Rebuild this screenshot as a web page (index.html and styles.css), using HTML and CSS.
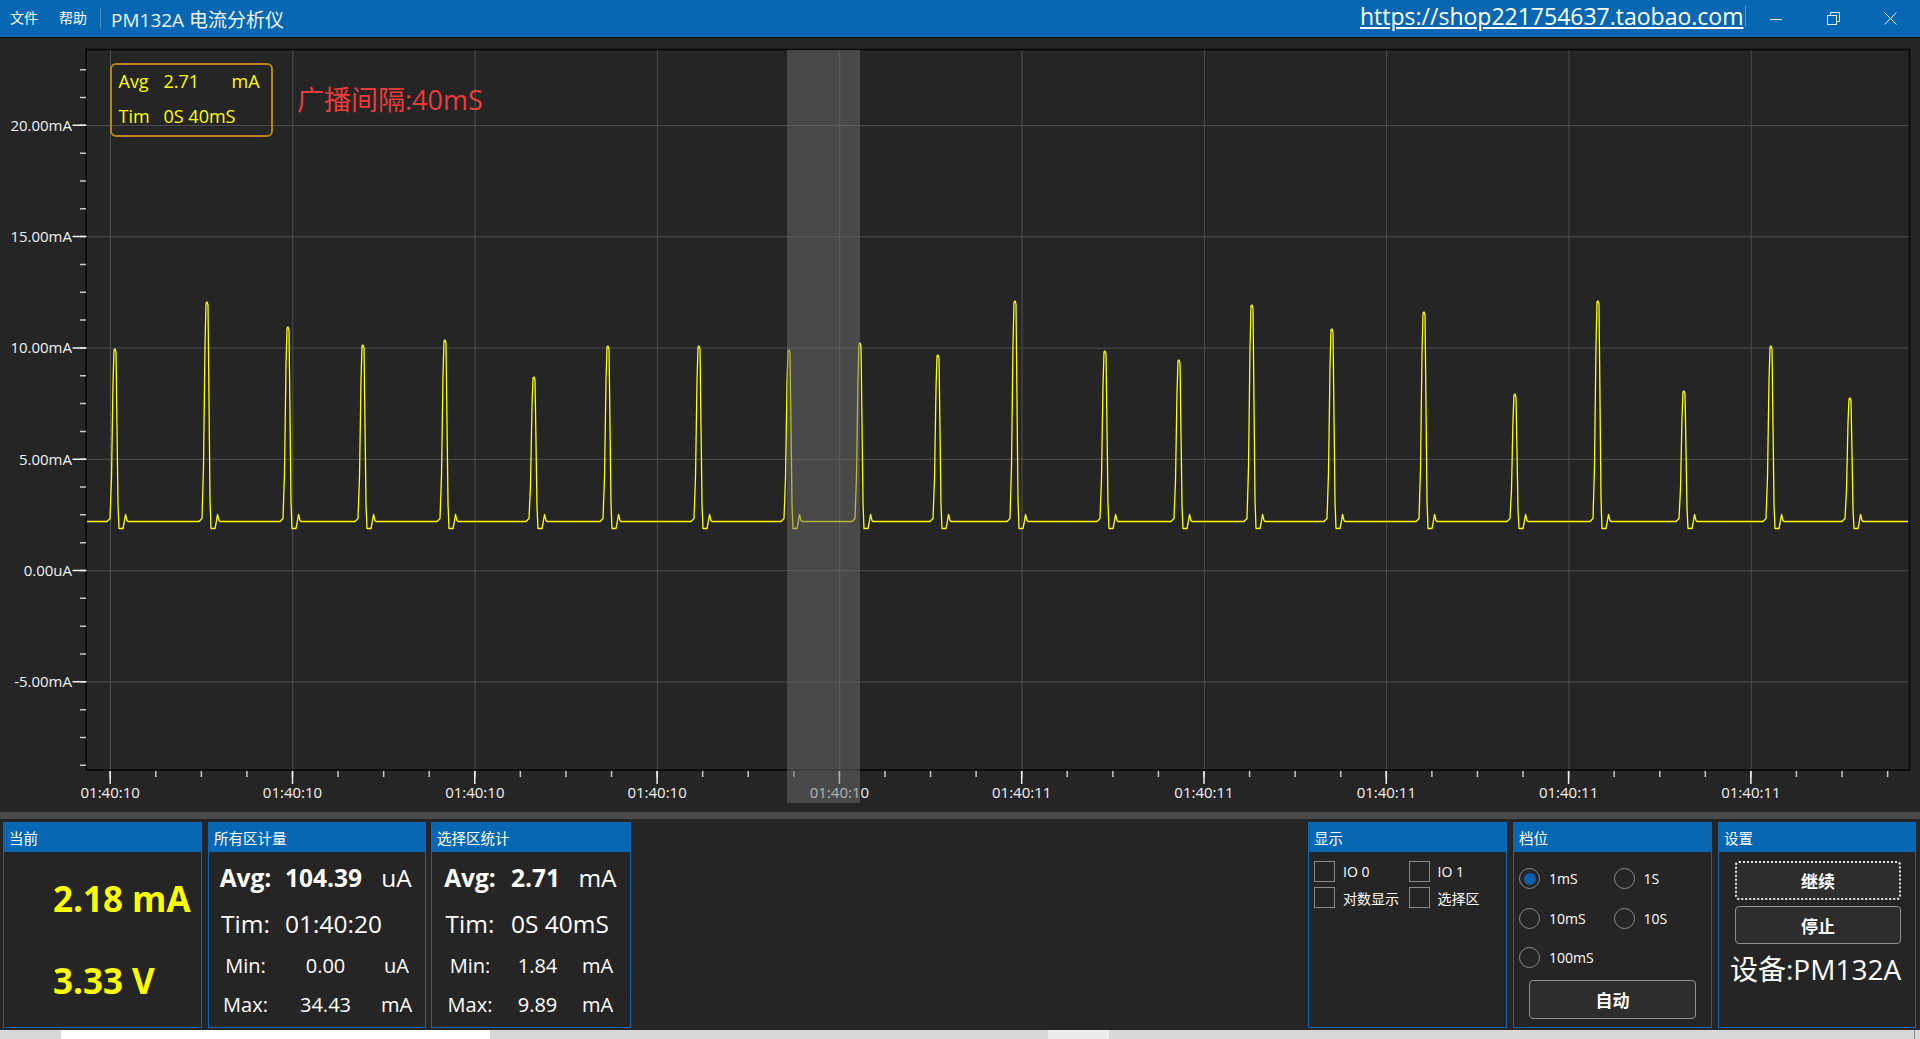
FILE: index.html
```html
<!DOCTYPE html>
<html lang="zh-CN">
<head>
<meta charset="utf-8">
<title>PM132A 电流分析仪</title>
<link rel="stylesheet" href="styles.css">
</head>
<body>
<div class="app">
  <header class="titlebar">
    <nav class="menu"><span class="menu-item">文件</span><span class="menu-item">帮助</span></nav>
    <span class="divider"></span>
    <span class="app-title">PM132A 电流分析仪</span>
    <a class="shop-link">https://shop221754637.taobao.com</a>
    <span class="caret"></span>
    <div class="win-controls">
      <span class="win-btn"><svg width="12" height="12" viewBox="0 0 12 12"><path d="M0 6.5h12" class="ico"/></svg></span>
      <span class="win-btn"><svg width="13" height="13" viewBox="0 0 13 13"><rect x="0.5" y="3.5" width="9" height="9" class="ico"/><path d="M3.5 3.5v-3h9v9h-3" class="ico"/></svg></span>
      <span class="win-btn"><svg width="13" height="13" viewBox="0 0 13 13"><path d="M0.5 0.5l12 12M12.5 0.5l-12 12" class="ico"/></svg></span>
    </div>
  </header>

  <section class="chart">
    <svg class="plot" width="1920" height="774" viewBox="0 38 1920 774">
      <g class="grid">
        <path d="M110.5,50v720m182.3,-720v720m182.3,-720v720m182.3,-720v720m182.3,-720v720m182.3,-720v720m182.3,-720v720m182.3,-720v720m182.3,-720v720m182.3,-720v720"/>
        <path d="M87,125.5h1822m-1822,111.3h1822m-1822,111.3h1822m-1822,111.3h1822m-1822,111.3h1822m-1822,111.3h1822"/>
      </g>
      <path class="trace" id="trace" d="M87,521.5L1908,521.5"/>
      <rect class="frame" x="86" y="49.5" width="1823.5" height="720.5"/>
      <path class="tick-minor" d="M80,69.65h6m-6,27.825h6m-6,27.825h6m-6,27.825h6m-6,27.825h6m-6,27.825h6m-6,27.825h6m-6,27.825h6m-6,27.825h6m-6,27.825h6m-6,27.825h6m-6,27.825h6m-6,27.825h6m-6,27.825h6m-6,27.825h6m-6,27.825h6m-6,27.825h6m-6,27.825h6m-6,27.825h6m-6,27.825h6m-6,27.825h6m-6,27.825h6m-6,27.825h6m-6,27.825h6m-6,27.825h6m-6,27.825h6"/>
      <path class="tick-major" d="M72.5,125.3h14m-14,111.3h14m-14,111.3h14m-14,111.3h14m-14,111.3h14m-14,111.3h14"/>
      <path class="tick-minor" d="M110.2,771v6m45.575,-6v6m45.575,-6v6m45.575,-6v6m45.575,-6v6m45.575,-6v6m45.575,-6v6m45.575,-6v6m45.575,-6v6m45.575,-6v6m45.575,-6v6m45.575,-6v6m45.575,-6v6m45.575,-6v6m45.575,-6v6m45.575,-6v6m45.575,-6v6m45.575,-6v6m45.575,-6v6m45.575,-6v6m45.575,-6v6m45.575,-6v6m45.575,-6v6m45.575,-6v6m45.575,-6v6m45.575,-6v6m45.575,-6v6m45.575,-6v6m45.575,-6v6m45.575,-6v6m45.575,-6v6m45.575,-6v6m45.575,-6v6m45.575,-6v6m45.575,-6v6m45.575,-6v6m45.575,-6v6m45.575,-6v6m45.575,-6v6m45.575,-6v6"/>
      <path class="tick-major" d="M110.2,771v13m182.3,-13v13m182.3,-13v13m182.3,-13v13m182.3,-13v13m182.3,-13v13m182.3,-13v13m182.3,-13v13m182.3,-13v13m182.3,-13v13"/>
      <g class="axis-label ylabels">
        <text x="72" y="130.6">20.00mA</text>
        <text x="72" y="241.9">15.00mA</text>
        <text x="72" y="353.2">10.00mA</text>
        <text x="72" y="464.5">5.00mA</text>
        <text x="72" y="575.8">0.00uA</text>
        <text x="72" y="687.1">-5.00mA</text>
      </g>
      <g class="axis-label xlabels">
        <text x="110.2" y="798.4">01:40:10</text>
        <text x="292.5" y="798.4">01:40:10</text>
        <text x="474.8" y="798.4">01:40:10</text>
        <text x="657.1" y="798.4">01:40:10</text>
        <text x="839.4" y="798.4">01:40:10</text>
        <text x="1021.7" y="798.4">01:40:11</text>
        <text x="1204" y="798.4">01:40:11</text>
        <text x="1386.3" y="798.4">01:40:11</text>
        <text x="1568.6" y="798.4">01:40:11</text>
        <text x="1750.9" y="798.4">01:40:11</text>
      </g>
      <rect class="selection" x="787" y="50" width="73" height="753"/>
    </svg>
    <div class="readout">
      <span>Avg</span><span>2.71</span><span>mA</span>
      <span>Tim</span><span class="span2">0S 40mS</span>
    </div>
    <div class="note">广播间隔:40mS</div>
  </section>

  <div class="splitter"></div>

  <section class="panels">
    <div class="panel p-now">
      <div class="panel-head">当前</div>
      <div class="now-body">
        <div class="now-val">2.18 mA</div>
        <div class="now-val second">3.33 V</div>
      </div>
    </div>
    <div class="panel p-all">
      <div class="panel-head">所有区计量</div>
      <div class="stats">
        <div class="row big"><span class="lbl b">Avg:</span><span class="val-l b">104.39</span><span class="unit">uA</span></div>
        <div class="row big r2"><span class="lbl">Tim:</span><span class="val-l span2">01:40:20</span></div>
        <div class="row small r3"><span class="lbl">Min:</span><span class="val-c">0.00</span><span class="unit">uA</span></div>
        <div class="row small r4"><span class="lbl">Max:</span><span class="val-c">34.43</span><span class="unit">mA</span></div>
      </div>
    </div>
    <div class="panel p-sel">
      <div class="panel-head">选择区统计</div>
      <div class="stats">
        <div class="row big"><span class="lbl b">Avg:</span><span class="val-l b">2.71</span><span class="unit">mA</span></div>
        <div class="row big r2"><span class="lbl">Tim:</span><span class="val-l span2">0S 40mS</span></div>
        <div class="row small r3"><span class="lbl">Min:</span><span class="val-c">1.84</span><span class="unit">mA</span></div>
        <div class="row small r4"><span class="lbl">Max:</span><span class="val-c">9.89</span><span class="unit">mA</span></div>
      </div>
    </div>
    <div class="spacer"></div>
    <div class="panel p-show">
      <div class="panel-head">显示</div>
      <div class="checks">
        <label class="check"><span class="box"></span>IO 0</label>
        <label class="check"><span class="box"></span>IO 1</label>
        <label class="check"><span class="box"></span>对数显示</label>
        <label class="check"><span class="box"></span>选择区</label>
      </div>
    </div>
    <div class="panel p-range">
      <div class="panel-head">档位</div>
      <div class="radios">
        <label class="radio"><span class="dot on"></span>1mS</label>
        <label class="radio"><span class="dot"></span>1S</label>
        <label class="radio"><span class="dot"></span>10mS</label>
        <label class="radio"><span class="dot"></span>10S</label>
        <label class="radio"><span class="dot"></span>100mS</label>
      </div>
      <div class="btn btn-auto">自动</div>
    </div>
    <div class="panel p-set">
      <div class="panel-head">设置</div>
      <div class="settings">
        <div class="btn btn-go">继续</div>
        <div class="btn btn-stop">停止</div>
        <div class="device">设备:PM132A</div>
      </div>
    </div>
  </section>

  <footer class="taskbar">
    <span class="tb-white"></span>
    <span class="tb-light"></span>
    <span class="tb-edge"></span>
  </footer>
</div>
<script src="script.js"></script>
</body>
</html>
```

FILE: styles.css
```css
* { box-sizing: border-box; }
html, body { margin: 0; padding: 0; }
body {
  width: 1920px;
  height: 1039px;
  overflow: hidden;
  background: #252525;
  color: #ffffff;
  font-family: "Open Sans", "Noto Sans CJK SC", sans-serif;
}
.app { display: flex; flex-direction: column; width: 1920px; height: 1039px; }

/* title bar */
.titlebar {
  flex: none;
  height: 38px;
  display: flex;
  align-items: center;
  background: #0767b3;
  border-bottom: 1px solid #101010;
  padding: 0 1.5px 0 10px;
}
.menu { display: flex; gap: 21px; font-size: 14px; margin-bottom: 4px; font-family: "Noto Sans CJK SC", sans-serif; }
.divider { width: 1px; height: 20px; background: #4f8ac4; margin: 0 0 2px 13px; }
.app-title { margin-left: 10px; font-size: 19px; color: #eef4fb; }
.shop-link {
  margin-left: auto;
  font-size: 23px;
  line-height: 30px;
  margin-bottom: 6px;
  color: #ffffff;
  text-decoration: underline;
  text-decoration-thickness: 1.5px;
  text-underline-offset: 2px;
}
.caret { width: 1px; height: 22px; background: #5d93cb; margin: 0 2px 6px 1px; }
.win-controls { display: flex; }
.win-btn { width: 57px; height: 37px; display: flex; align-items: center; justify-content: center; }
.ico { fill: none; stroke: #e8eef6; stroke-width: 1; }

/* chart */
.chart { position: relative; flex: none; height: 774px; }
.plot { display: block; }
.grid path { fill: none; stroke: #4e4e4e; stroke-width: 1; }
.frame { fill: none; stroke: #060606; stroke-width: 1.5; }
.trace { fill: none; stroke: #ffff00; stroke-width: 1.3; stroke-linejoin: round; }
.tick-minor { fill: none; stroke: #c8c8c8; stroke-width: 1.5; }
.tick-major { fill: none; stroke: #f0f0f0; stroke-width: 1.5; }
.axis-label { fill: #f2f2f2; font-size: 15px; font-family: "Open Sans", sans-serif; }
.ylabels text { text-anchor: end; }
.xlabels text { text-anchor: middle; }
.selection { fill: rgba(110, 110, 110, 0.5); }

.readout {
  position: absolute;
  left: 110px;
  top: 25px;
  width: 163px;
  height: 74px;
  border: 2px solid #b8860b;
  border-radius: 6px;
  padding: 4px 0 0 6.5px;
  display: grid;
  grid-template-columns: 45px 68px auto;
  grid-auto-rows: 24px;
  row-gap: 11px;
  font-size: 18px;
  line-height: 24px;
  color: #ffff00;
}
.readout .span2 { grid-column: 2 / 4; }
.note {
  position: absolute;
  left: 297px;
  top: 48px;
  font-size: 27px;
  line-height: 27px;
  color: #ef3a3a;
}

.splitter { flex: none; height: 7px; background: #4a4a4a; }

/* panels */
.panels { flex: none; height: 209px; padding: 3px 4px 0 3px; display: flex; }
.panel {
  height: 206px;
  border: 1px solid #0d66b2;
  background: #252525;
  display: flex;
  flex-direction: column;
}
.panel-head {
  flex: none;
  height: 29px;
  background: #0767b3;
  font-family: "Noto Sans CJK SC", sans-serif;
  font-size: 14.5px;
  line-height: 29px;
  padding-left: 5px;
  color: #ffffff;
}
.p-now { width: 199px; margin-right: 6px; }
.p-all { width: 218px; margin-right: 5px; }
.p-sel { width: 200px; }
.spacer { flex: 1; }
.p-show { width: 199px; margin-right: 6px; }
.p-range { width: 199px; margin-right: 6px; }
.p-set { width: 198px; }

.now-body { padding: 28.5px 0 0 49px; }
.now-val { font-size: 35px; line-height: 35px; font-weight: 700; color: #ffff00; white-space: nowrap; }
.now-val.second { margin-top: 47px; }

.stats { padding-top: 13px; }
.row { display: grid; white-space: nowrap; }
.p-all .row { grid-template-columns: 73px 87px 55px; }
.p-sel .row { grid-template-columns: 76px 59px 61px; }
.row.big { font-size: 24.5px; line-height: 25px; height: 25px; }
.row.small { font-size: 20px; line-height: 20px; height: 20px; }
.row.r2 { margin-top: 20.5px; }
.row.r3 { margin-top: 20.5px; }
.row.r4 { margin-top: 18.5px; }
.lbl { text-align: center; }
.b { font-weight: 700; }
.val-l { padding-left: 3px; }
.val-c { text-align: center; }
.unit { text-align: center; }
.row .span2 { grid-column: 2 / 4; }

.checks {
  padding: 9px 0 0 5px;
  display: grid;
  grid-template-columns: 94.5px 94.5px;
  row-gap: 5px;
}
.check { display: flex; align-items: center; gap: 8px; height: 21px; font-size: 14px; white-space: nowrap; }
.box { flex: none; width: 21px; height: 21px; border: 1.5px solid #8a8a8a; }

.radios {
  padding: 16px 0 0 5px;
  display: grid;
  grid-template-columns: 94.5px 94.5px;
  row-gap: 18.5px;
}
.radio { display: flex; align-items: center; gap: 9px; height: 21px; font-size: 14px; white-space: nowrap; }
.dot {
  flex: none;
  width: 21px;
  height: 21px;
  border-radius: 50%;
  border: 1.5px solid #8a8a8a;
  display: flex;
  align-items: center;
  justify-content: center;
}
.dot.on::after { content: ""; width: 12px; height: 12px; border-radius: 50%; background: #0a5fae; }

.btn {
  display: flex;
  align-items: center;
  justify-content: center;
  border: 1.5px solid #8f8f8f;
  border-radius: 4px;
  background: #2d2d2d;
  font-family: "Noto Sans CJK SC", sans-serif;
  font-weight: 700;
  font-size: 17px;
  color: #ffffff;
}
.btn-auto { margin: 12px 0 0 15px; width: 167px; height: 39px; }
.settings { padding: 9px 0 0 16px; }
.btn-go { width: 166px; height: 39px; border: 2px dotted #e6e6e6; }
.btn-stop { width: 166px; height: 38px; margin-top: 6px; }
.device { margin: 11px 0 0 -5px; font-size: 28px; line-height: 28px; white-space: nowrap; }

/* bottom strip */
.taskbar { flex: none; margin-top: 2px; height: 9px; background: #d8d8d8; display: flex; }
.tb-white { margin-left: 61px; width: 429px; background: #ffffff; }
.tb-light { margin-left: 558px; width: 61px; background: #ededed; }
.tb-edge { margin-left: auto; margin-right: 5px; width: 1px; background: #8a8a8a; }
```

FILE: script.js
```js
(function () {
  var B = 521.5;
  var peaks = [
    [116, 349], [208, 302], [289, 327], [364, 345], [446, 340], [535, 377],
    [609, 346], [700, 346], [790, 350], [861, 343], [939, 355], [1016, 301],
    [1106, 351], [1180, 360], [1253, 305], [1333, 329], [1425, 312], [1516, 394],
    [1599, 301], [1685, 391], [1772, 346], [1851, 398]
  ];
  var d = 'M87,' + B;
  peaks.forEach(function (pk) {
    var x = pk[0], p = pk[1], h = B - p;
    var pts = [
      [x - 9, B], [x - 6, B - 3], [x - 4.5, B - h * 0.25], [x - 3, B - h * 0.8],
      [x - 2, p + 1], [x - 1, p], [x, p + 3], [x + 1, B - h * 0.55], [x + 2, B - h * 0.1],
      [x + 3, B + 7], [x + 7, B + 7], [x + 8, B + 2], [x + 9.5, B - 7], [x + 11, B - 1], [x + 12, B]
    ];
    pts.forEach(function (q) {
      d += ' L' + q[0].toFixed(1) + ',' + q[1].toFixed(1);
    });
  });
  d += ' L1908,' + B;
  document.getElementById('trace').setAttribute('d', d);
})();
```
